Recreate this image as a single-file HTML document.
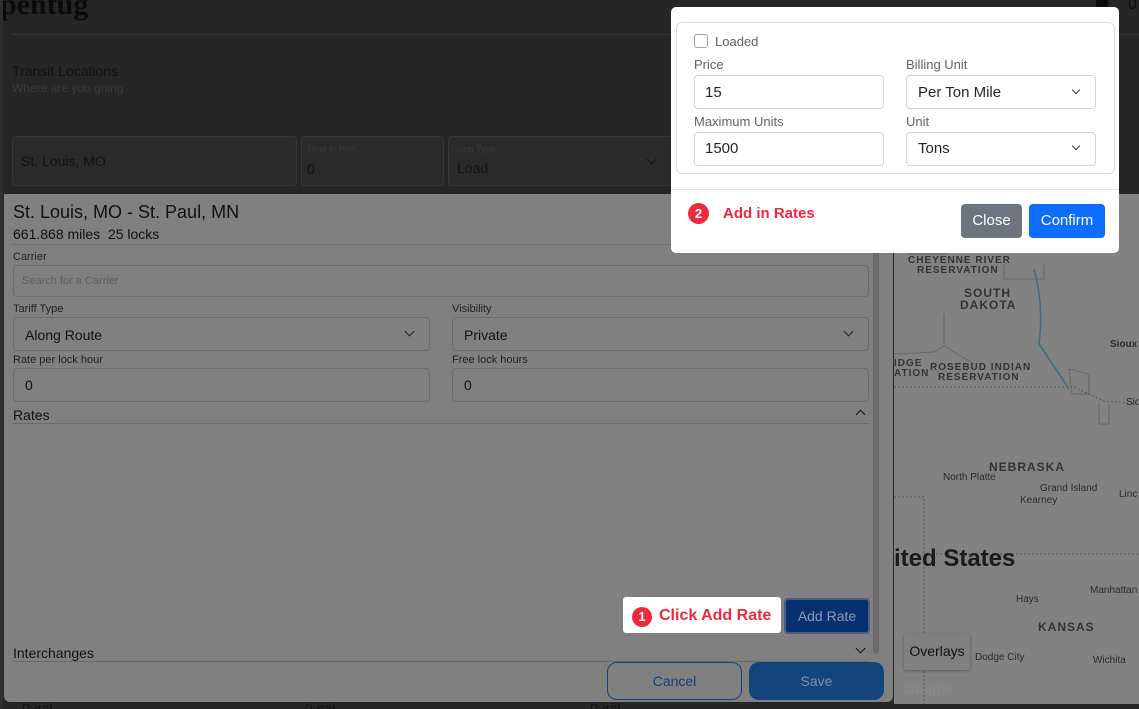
<!DOCTYPE html>
<html><head><style>
*{box-sizing:border-box;margin:0;padding:0}
html,body{width:1139px;height:709px;overflow:hidden}
body{background:#262626;font-family:"Liberation Sans",sans-serif;position:relative;color:#1b1b1b}
.a{position:absolute}
.box{position:absolute;border:1px solid #6c6c6c;border-radius:4px}
.dbox{position:absolute;border:1px solid #363636;border-radius:4px;background:#2a2a2a}
.lbl{position:absolute;font-size:11px;color:#222}
.chev{position:absolute;width:7px;height:7px;border-right:1.5px solid #222;border-bottom:1.5px solid #222;transform:rotate(45deg)}
.mt{position:absolute;font-size:11px;color:#333;letter-spacing:1px;font-weight:bold}
.mc{position:absolute;font-size:10px;color:#2a2a2a}
</style></head><body>
<div class="a" style="left:0;top:-12px;font-family:'Liberation Serif',serif;font-weight:bold;font-size:30px;color:#0b0b0b">pentug</div>
<div class="a" style="left:1096px;top:0;width:12px;height:10px;background:#0b0b0b;border-radius:0 0 6px 6px"></div>
<div class="a" style="left:1128px;top:-4px;font-size:16px;color:#0b0b0b">0</div>
<div class="a" style="left:12px;top:34px;width:1127px;height:1px;background:#363636"></div>
<div class="a" style="left:0;top:0;width:3px;height:709px;background:#2e2e2e"></div>
<div class="a" style="left:12px;top:63px;font-size:14px;color:#111">Transit Locations</div>
<div class="a" style="left:12px;top:81px;font-size:12px;color:#3a3a3a">Where are you going</div>
<div class="dbox" style="left:12px;top:136px;width:285px;height:50px"></div>
<div class="a" style="left:21px;top:153px;font-size:14px;color:#111">St. Louis, MO</div>
<div class="dbox" style="left:301px;top:136px;width:143px;height:50px"></div>
<div class="a" style="left:307px;top:144px;font-size:9px;color:#3a3a3a">Time in Port</div>
<div class="a" style="left:307px;top:161px;font-size:14px;color:#111">0</div>
<div class="dbox" style="left:448px;top:136px;width:230px;height:50px"></div>
<div class="a" style="left:455px;top:144px;font-size:9px;color:#3a3a3a">Stop Type</div>
<div class="a" style="left:457px;top:160px;font-size:14px;color:#111">Load</div>
<div class="chev" style="left:648px;top:156px;border-color:#111"></div>

<div class="a" style="left:4px;top:194px;width:889px;height:508px;background:#808080;border-radius:0 0 6px 6px"></div>
<div class="a" style="left:873px;top:196px;width:6px;height:458px;background:#6a6a6a;border-radius:3px"></div>
<div class="a" style="left:13px;top:202px;font-size:18px;color:#111">St. Louis, MO - St. Paul, MN</div>
<div class="a" style="left:13px;top:226px;font-size:14px;color:#111">661.868 miles&nbsp; 25 locks</div>
<div class="a" style="left:13px;top:244px;width:856px;height:1px;background:#6a6a6a"></div>
<div class="lbl" style="left:13px;top:251px">Carrier</div>
<div class="box" style="left:13px;top:265px;width:856px;height:32px"></div>
<div class="a" style="left:22px;top:275px;font-size:11px;color:#5c5c5c">Search for a Carrier</div>
<div class="lbl" style="left:13px;top:303px">Tariff Type</div>
<div class="box" style="left:13px;top:317px;width:417px;height:34px"></div>
<div class="a" style="left:25px;top:327px;font-size:14px;color:#111">Along Route</div>
<div class="chev" style="left:406px;top:328px"></div>
<div class="lbl" style="left:452px;top:303px">Visibility</div>
<div class="box" style="left:452px;top:317px;width:417px;height:34px"></div>
<div class="a" style="left:464px;top:327px;font-size:14px;color:#111">Private</div>
<div class="chev" style="left:845px;top:328px"></div>
<div class="lbl" style="left:13px;top:354px">Rate per lock hour</div>
<div class="box" style="left:13px;top:368px;width:417px;height:34px"></div>
<div class="a" style="left:25px;top:377px;font-size:14px;color:#111">0</div>
<div class="lbl" style="left:452px;top:354px">Free lock hours</div>
<div class="box" style="left:452px;top:368px;width:417px;height:34px"></div>
<div class="a" style="left:464px;top:377px;font-size:14px;color:#111">0</div>
<div class="a" style="left:13px;top:407px;font-size:14px;color:#111">Rates</div>
<div class="chev" style="left:857px;top:411px;transform:rotate(225deg);border-color:#111"></div>
<div class="a" style="left:13px;top:423px;width:856px;height:1px;background:#6a6a6a"></div>

<div class="a" style="left:623px;top:597px;width:158px;height:36px;background:#fff;border-radius:3px"></div>
<div class="a" style="left:632px;top:607px;width:20px;height:20px;border-radius:50%;background:#f0283c;color:#fff;font-size:13px;font-weight:bold;text-align:center;line-height:20px">1</div>
<div class="a" style="left:659px;top:607px;font-size:16px;font-weight:bold;color:#f0283c">Click Add Rate</div>
<div class="a" style="left:784px;top:598px;width:86px;height:36px;background:#063070;border:2px solid #4a5e80;border-radius:4px;color:#8a9ab2;font-size:14px;text-align:center;line-height:32px">Add Rate</div>
<div class="a" style="left:13px;top:645px;font-size:14px;color:#111">Interchanges</div>
<div class="chev" style="left:857px;top:645px;border-color:#111"></div>
<div class="a" style="left:13px;top:661px;width:856px;height:1px;background:#6a6a6a"></div>
<div class="a" style="left:607px;top:662px;width:135px;height:38px;border:1px solid #13427c;border-radius:10px;color:#15407a;font-size:14px;text-align:center;line-height:36px">Cancel</div>
<div class="a" style="left:749px;top:662px;width:135px;height:38px;background:#14457a;border-radius:10px;color:#7f93b0;font-size:14px;text-align:center;line-height:38px">Save</div>
<div class="a" style="left:22px;top:700px;font-size:14px;color:#111">0 gal</div>
<div class="a" style="left:305px;top:700px;font-size:14px;color:#111">0 gal</div>
<div class="a" style="left:590px;top:700px;font-size:14px;color:#111">0 gal</div>

<div class="a" style="left:894px;top:194px;width:245px;height:510px;background:#828282"></div>
<svg class="a" style="left:894px;top:194px" width="245" height="510">
<g fill="none" stroke="#666" stroke-width="1">
<path d="M14 60 L14 30 M14 60 L50 60 L60 50 L100 40"/>
<path d="M0 160 L40 158 L50 152 L50 120 M50 152 L80 170"/>
<path d="M110 70 L110 85 L150 85 L150 70"/>
<path d="M175 175 L195 180 L195 200 L178 200 Z"/>
<path d="M205 210 L205 230 L215 230 L215 210"/>
</g>
<g fill="none" stroke="#555" stroke-dasharray="2,2"><path d="M0 193 L180 193 L210 207 L245 210"/><path d="M0 303 L30 303 L30 515"/><path d="M30 360 L245 360"/></g>
<path d="M140 75 Q150 110 145 150 Q165 180 175 195" fill="none" stroke="#3c6e80" stroke-width="1.5"/>
</svg>
<div class="mt" style="left:908px;top:255px;font-size:10px">CHEYENNE RIVER</div>
<div class="mt" style="left:917px;top:265px;font-size:10px">RESERVATION</div>
<div class="mt" style="left:964px;top:286px;font-size:12px">SOUTH</div>
<div class="mt" style="left:960px;top:298px;font-size:12px">DAKOTA</div>
<div class="mt" style="left:894px;top:358px;font-size:10px">IDGE</div>
<div class="mt" style="left:894px;top:368px;font-size:10px">ATION</div>
<div class="mt" style="left:930px;top:362px;font-size:10px">ROSEBUD INDIAN</div>
<div class="mt" style="left:938px;top:372px;font-size:10px">RESERVATION</div>
<div class="mc" style="left:1110px;top:339px;font-weight:bold;white-space:nowrap">Sioux F</div>
<div class="mc" style="left:1126px;top:397px">Sio</div>
<div class="mt" style="left:989px;top:460px;font-size:12px">NEBRASKA</div>
<div class="mc" style="left:943px;top:472px">North Platte</div>
<div class="mc" style="left:1040px;top:483px">Grand Island</div>
<div class="mc" style="left:1020px;top:495px">Kearney</div>
<div class="mc" style="left:1119px;top:489px">Linc</div>
<div class="a" style="left:894px;top:545px;font-size:24px;font-weight:bold;color:#1b1b1b">ited States</div>
<div class="mc" style="left:1090px;top:585px">Manhattan</div>
<div class="mc" style="left:1016px;top:594px">Hays</div>
<div class="mt" style="left:1038px;top:620px;font-size:12px">KANSAS</div>
<div class="mc" style="left:975px;top:652px">Dodge City</div>
<div class="mc" style="left:1093px;top:655px">Wichita</div>
<div class="a" style="left:904px;top:634px;width:66px;height:36px;background:#808080;border-radius:2px;box-shadow:0 1px 3px rgba(0,0,0,.3);font-size:14px;color:#111;text-align:center;line-height:34px">Overlays</div>
<div class="a" style="left:904px;top:681px;font-size:14px;font-weight:bold;color:#888">Google</div>

<div class="a" style="left:671px;top:7px;width:448px;height:246px;background:#fff;border-radius:5px"></div>
<div class="a" style="left:676px;top:22px;width:439px;height:152px;border:1px solid #d6d8db;border-radius:6px"></div>
<div class="a" style="left:694px;top:34px;width:14px;height:14px;border:1px solid #9aa0a6;border-radius:3px"></div>
<div class="a" style="left:715px;top:34px;font-size:13px;color:#5c636a">Loaded</div>
<div class="a" style="left:694px;top:57px;font-size:13px;color:#5c636a">Price</div>
<div class="a" style="left:694px;top:75px;width:190px;height:34px;border:1px solid #ced4da;border-radius:4px"></div>
<div class="a" style="left:705px;top:84px;font-size:15px;color:#212529">15</div>
<div class="a" style="left:906px;top:57px;font-size:13px;color:#5c636a">Billing Unit</div>
<div class="a" style="left:906px;top:75px;width:190px;height:34px;border:1px solid #ced4da;border-radius:4px"></div>
<div class="a" style="left:918px;top:84px;font-size:15px;color:#212529">Per Ton Mile</div>
<div class="chev" style="left:1073px;top:87px;width:6px;height:6px;border-color:#333"></div>
<div class="a" style="left:694px;top:114px;font-size:13px;color:#5c636a">Maximum Units</div>
<div class="a" style="left:694px;top:132px;width:190px;height:34px;border:1px solid #ced4da;border-radius:4px"></div>
<div class="a" style="left:705px;top:140px;font-size:15px;color:#212529">1500</div>
<div class="a" style="left:906px;top:114px;font-size:13px;color:#5c636a">Unit</div>
<div class="a" style="left:906px;top:132px;width:190px;height:34px;border:1px solid #ced4da;border-radius:4px"></div>
<div class="a" style="left:918px;top:140px;font-size:15px;color:#212529">Tons</div>
<div class="chev" style="left:1073px;top:143px;width:6px;height:6px;border-color:#333"></div>
<div class="a" style="left:671px;top:189px;width:448px;height:1px;background:#dee2e6"></div>
<div class="a" style="left:688px;top:203px;width:21px;height:21px;border-radius:50%;background:#f0283c;color:#fff;font-size:13px;font-weight:bold;text-align:center;line-height:21px">2</div>
<div class="a" style="left:723px;top:205px;font-size:15px;font-weight:bold;color:#f0283c">Add in Rates</div>
<div class="a" style="left:961px;top:204px;width:61px;height:34px;background:#6c757d;border-radius:4px;color:#fff;font-size:15px;text-align:center;line-height:34px">Close</div>
<div class="a" style="left:1029px;top:204px;width:76px;height:34px;background:#0d6efd;border-radius:4px;color:#fff;font-size:15px;text-align:center;line-height:34px">Confirm</div>
</body></html>
